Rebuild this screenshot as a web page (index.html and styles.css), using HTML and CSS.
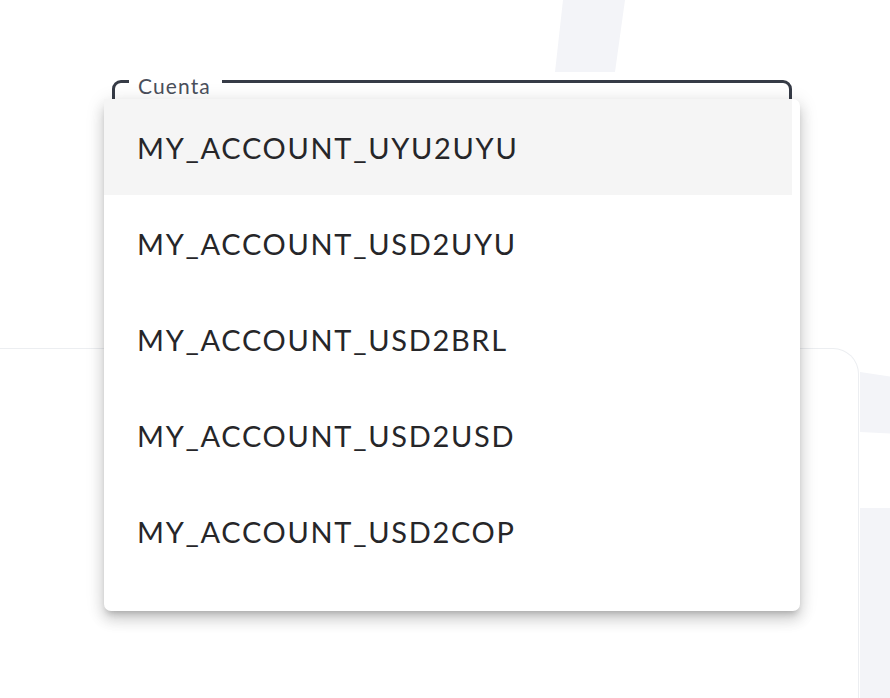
FILE: index.html
```html
<!DOCTYPE html>
<html lang="es">
<head>
<meta charset="utf-8">
<title>Cuenta</title>
<link rel="stylesheet" href="styles.css">
</head>
<body>
<div class="page">
  <div class="deco deco-top"></div>
  <div class="deco deco-right1"></div>
  <div class="deco deco-right2"></div>
  <div class="card-line"></div>
  <div class="card"></div>

  <div class="field-wrap">
    <fieldset class="field">
      <legend class="field-label">Cuenta</legend>
    </fieldset>
  </div>

  <ul class="menu">
    <li class="menu-item selected">MY_ACCOUNT_UYU2UYU</li>
    <li class="menu-item">MY_ACCOUNT_USD2UYU</li>
    <li class="menu-item">MY_ACCOUNT_USD2BRL</li>
    <li class="menu-item">MY_ACCOUNT_USD2USD</li>
    <li class="menu-item">MY_ACCOUNT_USD2COP</li>
  </ul>
</div>
</body>
</html>
```

FILE: styles.css
```css
html, body {
  margin: 0;
  padding: 0;
  background: #ffffff;
}

.page {
  position: relative;
  width: 890px;
  height: 698px;
  overflow: hidden;
  font-family: "Lato", "Noto Sans", sans-serif;
}

.deco {
  position: absolute;
  background: #f3f4f8;
}

.deco-top {
  left: 555px;
  top: 0;
  width: 70px;
  height: 72px;
  clip-path: polygon(8px 0, 70px 0, 60px 72px, 0 72px);
}

.deco-right1 {
  left: 860px;
  top: 370px;
  width: 40px;
  height: 64px;
  clip-path: polygon(0 2px, 40px 8px, 40px 64px, 0 62px);
}

.deco-right2 {
  left: 860px;
  top: 508px;
  width: 40px;
  height: 200px;
}

.card-line {
  position: absolute;
  left: 0;
  top: 348px;
  width: 800px;
  height: 1px;
  background: #eceef1;
}

.card {
  position: absolute;
  left: 600px;
  top: 348px;
  width: 258px;
  height: 400px;
  border: 1px solid #eceef1;
  border-left: none;
  border-top-right-radius: 26px;
  background: #ffffff;
}

.field-wrap {
  position: relative;
  padding: 66px 0 0 112px;
}

.field {
  box-sizing: border-box;
  width: 680px;
  height: 120px;
  margin: 0;
  padding: 0 0 0 14px;
  border: 3px solid #363b46;
  border-radius: 9px;
  background: #ffffff;
}

.field-label {
  padding: 9px 11px 0 9px;
  font-size: 21px;
  line-height: 22px;
  color: #4a4f5b;
  letter-spacing: 1.1px;
}

.menu {
  position: absolute;
  left: 104px;
  top: 99px;
  width: 696px;
  height: 512px;
  margin: 0;
  padding: 0 8px 0 0;
  box-sizing: border-box;
  list-style: none;
  background: #ffffff;
  border-radius: 7px;
  box-shadow: 0 5px 6px -3px rgba(0,0,0,0.2), 0 9px 14px 1px rgba(0,0,0,0.12), 0 3px 18px 2px rgba(0,0,0,0.1);
}

.menu-item {
  height: 96px;
  display: flex;
  align-items: center;
  padding-left: 33px;
  font-size: 29px;
  color: #262629;
  letter-spacing: 1.7px;
}

.menu-item.selected {
  background: #f5f5f5;
}
```
